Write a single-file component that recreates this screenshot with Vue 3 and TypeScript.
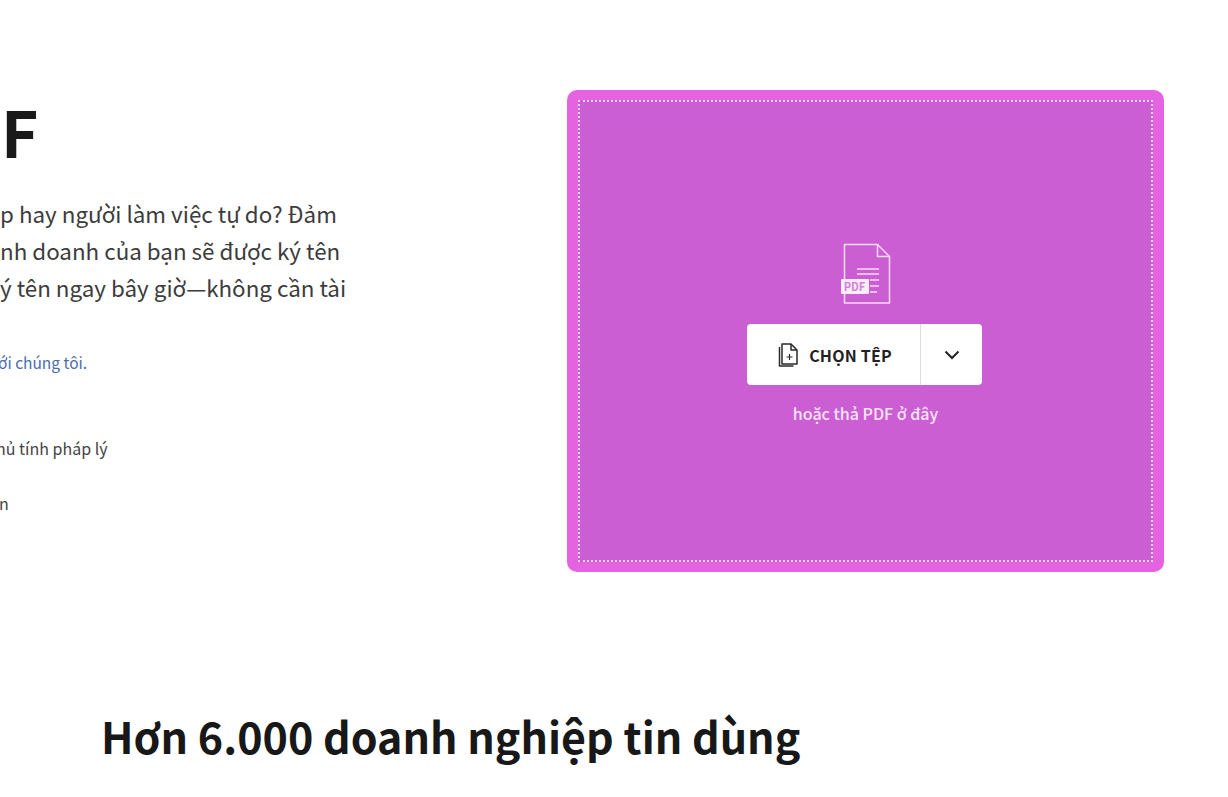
<script setup lang="ts">
const lines: string[] = [
  'p hay người làm việc tự do? Đảm',
  'nh doanh của bạn sẽ được ký tên',
  'ý tên ngay bây giờ—không cần tài',
]
</script>

<template>
  <main class="page">
    <section class="hero">
      <div class="intro">
        <h1 class="title">F</h1>
        <p class="copy"><span v-for="l in lines" :key="l" class="line">{{ l }}</span></p>
        <a class="link">với chúng tôi.</a>
        <p class="note first">hủ tính pháp lý</p>
        <p class="note second">n</p>
      </div>
      <div class="drop">
        <div class="dash">
          <div class="pdf">
            <svg width="50" height="62" viewBox="0 0 50 62" fill="none" stroke="#f8dcf8" stroke-width="1.5">
              <path d="M3.500 36V1.500h33l12 12v46.500h-45V51" stroke-linejoin="round" />
              <path d="M36.500 1.500v12h12" stroke-linejoin="round" />
              <path d="M16 26h22M16 31h22M29 37h9M29 43h9M29 49h7" />
            </svg>
            <span class="badge">PDF</span>
          </div>
          <div class="button">
            <div class="choose">
              <svg width="24" height="26" viewBox="0 0 24 26" fill="none" stroke="#2a2a2a" stroke-width="1.500" stroke-linejoin="round">
                <path d="M7 2h9l6 6v14H7z" />
                <path d="M16 2v6h6M4.500 5v19h14" />
                <path d="M14.500 12v6M11.500 15h6" stroke-width="1.200" />
              </svg>
              <span>CHỌN TỆP</span>
            </div>
            <div class="arrow">
              <svg width="16" height="10" viewBox="0 0 16 10" fill="none" stroke="#222" stroke-width="2">
                <path d="M1.500 1.500 8 8l6.500-6.500" />
              </svg>
            </div>
          </div>
          <p class="hint">hoặc thả PDF ở đây</p>
        </div>
      </div>
    </section>
    <h2 class="trust">Hơn 6.000 doanh nghiệp tin dùng</h2>
  </main>
</template>

<style>
html, body { margin: 0; background: #fff; overflow: hidden; }
</style>

<style scoped>
.page {
  width: 1228px;
  height: 797px;
  overflow: hidden;
  box-sizing: border-box;
  padding-top: 90px;
  font-family: "Noto Sans CJK SC", "Noto Sans", sans-serif;
  color: #1d1d1d;
}
.hero { display: flex; justify-content: space-between; width: 1164px; }
.intro { width: 360px; }
.title { margin: -3px 0 0 1px; font-size: 64px; line-height: 86px; font-weight: 700; color: #1a1a1a; }
.copy { margin: 22px 0 0; font-size: 22.400px; line-height: 37px; color: #3c3c3c; }
.line { display: block; white-space: nowrap; }
.link { display: block; margin: 45px 0 0 -10px; font-size: 15.500px; line-height: 22px; color: #4a6db0; white-space: nowrap; }
.note { margin: 0; font-size: 16px; line-height: 24px; color: #444; white-space: nowrap; }
.first { margin-top: 63px; margin-left: -4px; }
.second { margin-top: 31px; margin-left: -1px; }
.drop {
  width: 597px;
  height: 482px;
  box-sizing: border-box;
  padding: 10px 11px;
  border-radius: 10px;
  background: #e563e0;
}
.dash {
  height: 100%;
  box-sizing: border-box;
  border: 2px dotted #f5d8f5;
  background: #cc5ed3;
  display: flex;
  flex-direction: column;
  align-items: center;
  padding-top: 141px;
}
.pdf { position: relative; width: 50px; height: 62px; }
.badge {
  position: absolute;
  left: 0;
  top: 36px;
  width: 28px;
  height: 15px;
  border-radius: 1px;
  background: #fbeefb;
  color: #d27ed8;
  font-size: 11px;
  font-weight: 700;
  line-height: 15px;
  text-align: center;
}
.button {
  display: flex;
  width: 235px;
  height: 61px;
  margin-top: 19px;
  margin-left: -2px;
  border-radius: 4px;
  background: #fff;
}
.choose {
  flex: 1;
  display: flex;
  align-items: center;
  justify-content: center;
  gap: 10px;
  font-size: 16px;
  font-weight: 700;
  letter-spacing: 0.2px;
  color: #222;
}
.arrow {
  width: 61px;
  display: flex;
  align-items: center;
  justify-content: center;
  border-left: 1px solid #ddd;
}
.hint { margin: 16px 0 0; font-size: 16px; line-height: 24px; color: #fbe4fb; font-weight: 500; }
.trust { margin: 133px 0 0 101px; font-size: 43px; line-height: 60px; font-weight: 700; color: #181818; }
</style>
